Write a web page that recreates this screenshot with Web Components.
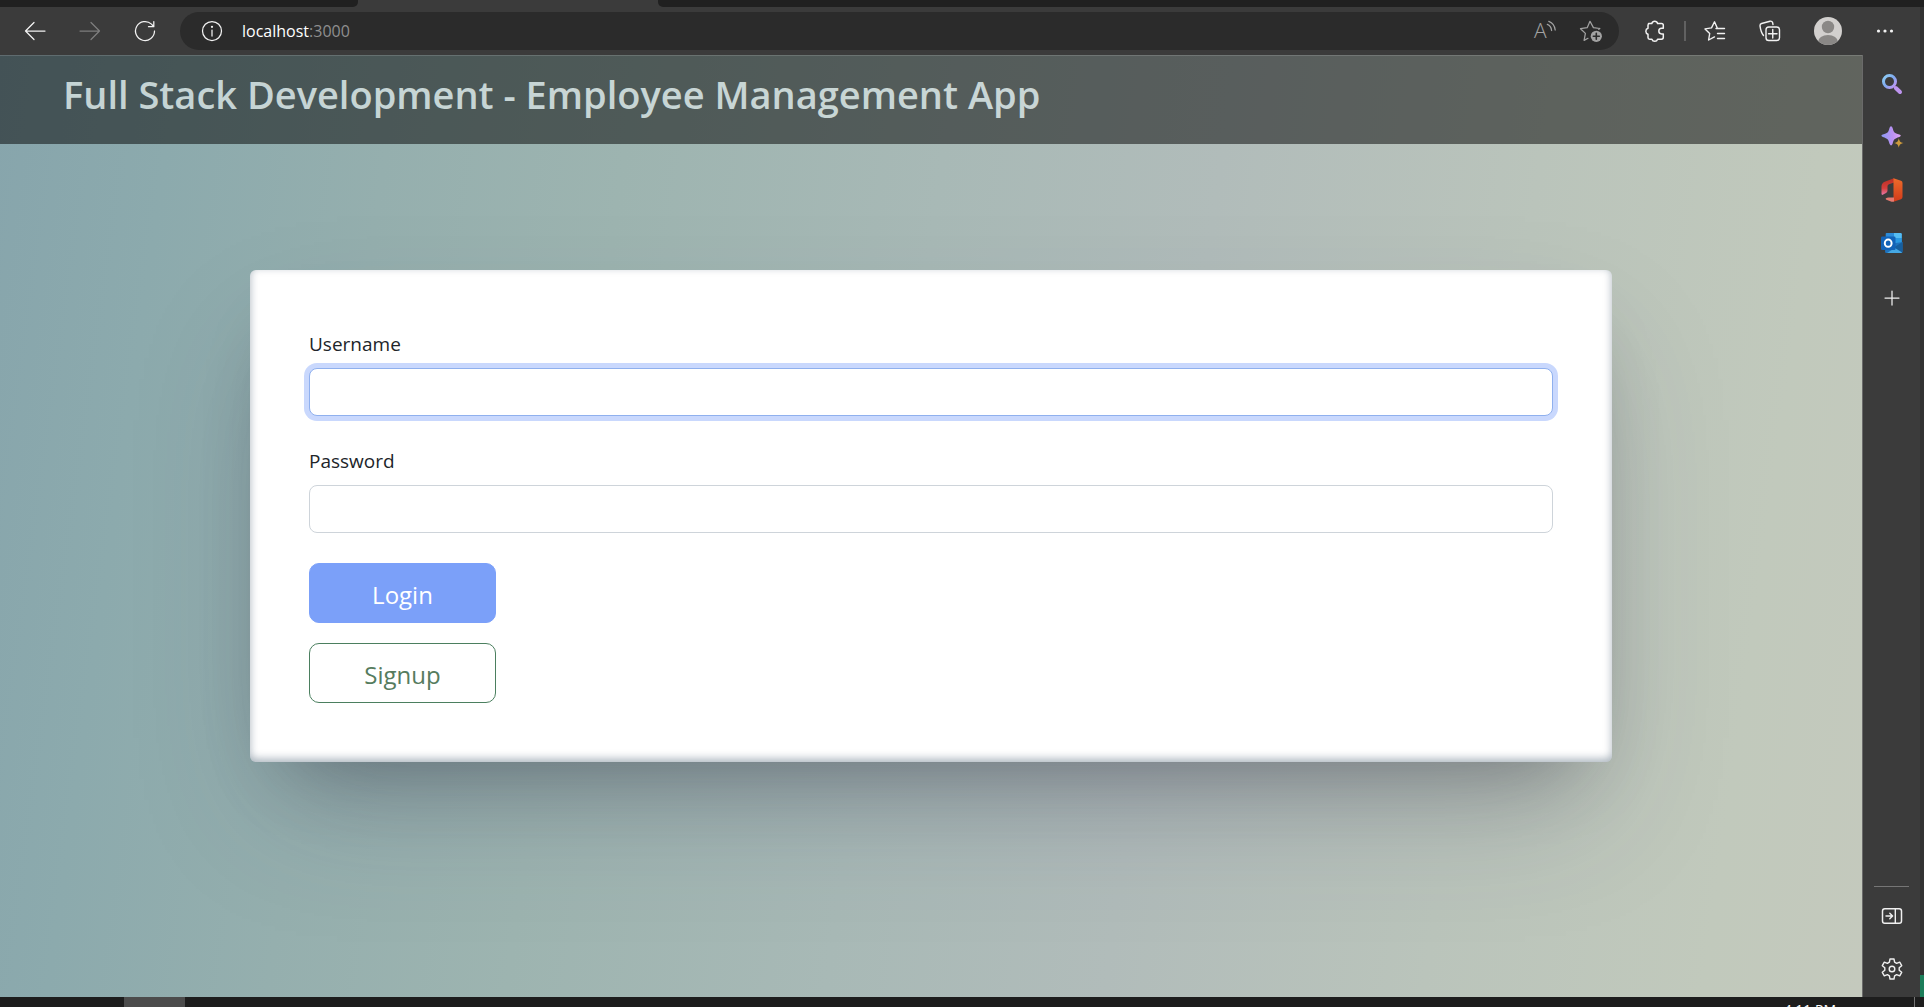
<!DOCTYPE html>
<html lang="en">
<head>
<meta charset="utf-8">
<title>Employee Management App</title>
<style>
  body { margin: 0; font-family: "Open Sans", "Noto Sans", sans-serif; background: #202020; }
</style>
</head>
<body>
<browser-window>
  <browser-toolbar slot="toolbar"></browser-toolbar>
  <app-page>
    <app-header>Full Stack Development - Employee Management App</app-header>
    <login-card></login-card>
  </app-page>
  <side-bar slot="side"></side-bar>
  <task-bar slot="taskbar"></task-bar>
</browser-window>

<script>
const define = (name, html) => {
  const tpl = document.createElement('template');
  tpl.innerHTML = html;
  customElements.define(name, class extends HTMLElement {
    constructor() {
      super();
      this.attachShadow({ mode: 'open' }).append(tpl.content.cloneNode(true));
    }
  });
};

const base = `
  * { box-sizing: border-box; }
  button { display: grid; place-items: center; padding: 0; border: 0; background: none; color: inherit; font: inherit; }
  svg { display: block; width: 24px; height: 24px; fill: none; stroke: currentColor; stroke-width: 1.25; stroke-linecap: round; stroke-linejoin: round; overflow: visible; }
`;

define('browser-window', `
  <style>
    :host { display: flex; flex-direction: column; height: 100vh; overflow: hidden; background: #202020; }
    .tabs { display: flex; flex: none; height: 7px; background: #3b3b3b; }
    .tabs i { background: #202020; }
    .before { width: 358px; border-radius: 0 0 5px 0; }
    .active { width: 300px; }
    .tabs i.active { background: #3b3b3b; }
    .after { flex: 1; border-radius: 0 0 0 5px; }
    .main { display: flex; flex: 1; min-height: 0; }
    .view { display: flex; flex: 1; }
    .edge { display: flex; flex-direction: column; justify-content: flex-end; width: 4px; background: #323232; }
    .edge i { height: 22px; background: #1c7e5a; }
    .left { display: flex; flex-direction: column; flex: 1; }
    .rest { display: flex; flex: 1; min-height: 0; }
  </style>
  <div class="tabs"><i class="before"></i><i class="active"></i><i class="after"></i></div>
  <div class="main">
    <div class="left">
      <slot name="toolbar"></slot>
      <div class="rest"><div class="view"><slot></slot></div><slot name="side"></slot></div>
    </div>
    <div class="edge"><i></i></div>
  </div>
  <slot name="taskbar"></slot>
`);

define('browser-toolbar', `
  <style>${base}
    :host { display: flex; align-items: center; flex: none; height: 48px; padding: 0 23px; background: #3b3b3b; color: #f2f2f2; }
    .nav { display: flex; gap: 31px; }
    .dim { color: #7d7d7d; }
    .pill { display: flex; align-items: center; flex: 1; height: 38px; margin: 0 24px 0 23px; padding: 0 16px 0 20px; border-radius: 19px; background: #2b2b2b; }
    .url { flex: 1; margin-left: 18px; font-size: 16px; line-height: 24px; color: #fff; }
    .url span { color: #8f8f8f; }
    .actions { display: flex; gap: 21px; color: #a2a2a2; }
    .tools { display: flex; align-items: center; }
    .rule { width: 2px; height: 20px; margin: 0 17px; background: #616161; }
    .tools button + button { margin-left: 31px; }
    .tools .avatar + button { margin-left: 30px; }
    .avatar svg { width: 30px; height: 30px; }
  </style>
  <div class="nav">
    <button aria-label="Back"><svg viewBox="0 0 24 24"><path d="M22 12H2.500M11 3.500 2.500 12l8.500 8.500"/></svg></button>
    <button aria-label="Forward" class="dim"><svg viewBox="0 0 24 24"><path d="M2 12h19.500M13 3.500l8.500 8.500-8.500 8.500"/></svg></button>
    <button aria-label="Refresh"><svg viewBox="0 0 24 24"><path d="M21.500 12A9.500 9.500 0 1 1 18.500 5.100L20.500 7.500M20.800 2.500v5.200h-5.300"/></svg></button>
  </div>
  <div class="pill">
    <button aria-label="Site information"><svg viewBox="0 0 24 24"><circle cx="12" cy="12" r="9.500"/><path d="M12 11v6"/><circle cx="12" cy="7.800" r=".5" fill="currentColor"/></svg></button>
    <div class="url">localhost<span>:3000</span></div>
    <div class="actions">
      <button aria-label="Read aloud"><svg viewBox="0 0 24 24"><text x="0" y="19" font-size="21" font-weight="300" fill="currentColor" stroke="none">A</text><path d="M13.300 5.400c2.600 1 4 3.100 4.300 6.100M14.800 2.300c3.800 1.500 6 4.500 6.400 8.700" /></svg></button>
      <button aria-label="Add to favorites"><svg viewBox="0 0 24 24"><path d="M20.800 9.500 14.400 8.600 11 2.300 8.200 8.700l-6.700 1 4.900 4.700-1.300 7 3.900-2.100M20.800 9.500l-1 .8"/><circle cx="17.300" cy="17.300" r="5.600" fill="currentColor" stroke="none"/><path d="M17.300 14.300v6M14.300 17.300h6" stroke="#2b2b2b" stroke-width="1.600"/></svg></button>
    </div>
  </div>
  <div class="tools">
    <button aria-label="Extensions"><svg viewBox="0 0 24 24"><path d="M5.600 4.500H8.800A3 3 0 0 1 14.600 4.500H18.500Q20.300 4.500 20.300 6.300V9.300H18.600A2.700 2.700 0 0 0 18.600 14.900H20.300V18.300Q20.300 20.200 18.500 20.200H14.600A3 3 0 0 1 8.900 20.200H6.600Q5 20.200 5 18.600V15.200A3.100 3.100 0 0 1 5 9.300V6.200Q5 4.500 6.600 4.500Z" stroke-width="1.500"/></svg></button>
    <div class="rule"></div>
    <button aria-label="Favorites"><svg viewBox="0 0 24 24"><path d="M21.500 9.500h-7L11.500 2.800 8.500 8.900l-6.500 1 4.700 4.600-1.100 6.500 5.900-3.100M14.500 14.500h7M14.500 19.500h7M13 9.500h8.500" stroke-width="1.400"/></svg></button>
    <button aria-label="Collections"><svg viewBox="0 0 24 24"><path d="M5.500 16.500C3 13.500 2.500 10.500 2 6.800Q1.900 5 3.600 4.500L12 2.200Q14 1.900 14.600 3.600L15 5.500" stroke-width="1.400"/><rect x="8" y="8" width="13.500" height="13.500" rx="2.800" stroke-width="1.400"/><path d="M14.750 10.500v8.500M10.500 14.750h8.500" stroke-width="1.400"/></svg></button>
    <button aria-label="Profile" class="avatar"><svg viewBox="0 0 30 30" style="stroke:none"><clipPath id="c"><circle cx="15" cy="15" r="14"/></clipPath><g clip-path="url(#c)"><path d="M0 0h30v30H0z" fill="#d2d0ce"/><circle cx="15" cy="11" r="6.200" fill="#8a8886"/><ellipse cx="15" cy="26" rx="10" ry="7" fill="#8a8886"/></g></svg></button>
    <button aria-label="Settings and more"><svg viewBox="0 0 24 24"><g fill="currentColor" stroke="none"><circle cx="5.500" cy="12" r="1.600"/><circle cx="12" cy="12" r="1.600"/><circle cx="18.500" cy="12" r="1.600"/></g></svg></button>
  </div>
`);

define('side-bar', `
  <style>${base}
    :host { display: flex; flex-direction: column; align-items: center; box-sizing: border-box; width: 58px; padding: 17px 0 16px; border-left: 1px solid #6a6a6a; background: #3b3b3b; color: #f0f0f0; }
    .top, .bottom { display: flex; flex-direction: column; gap: 29px; }
    .top { flex: 1; }
    .bottom { padding-top: 17px; border-top: 1px solid #767676; width: 35px; align-items: center; }
  </style>
  <div class="top">
    <button aria-label="Search"><svg viewBox="0 0 24 24"><defs><linearGradient id="s" x1="0" y1="0" x2="1" y2="1"><stop offset="0" stop-color="#8fd0f5"/><stop offset=".5" stop-color="#7fa8ee"/><stop offset="1" stop-color="#c795f3"/></linearGradient></defs><circle cx="9.500" cy="9.500" r="6" stroke="url(#s)" stroke-width="3"/><path d="m15.800 16 4.200 4" stroke="#bd94ee" stroke-width="4"/></svg></button>
    <button aria-label="Discover"><svg viewBox="0 0 24 24"><defs><linearGradient id="d" x1="0" y1="0" x2="1" y2="0"><stop offset="0" stop-color="#8b9af5"/><stop offset=".6" stop-color="#bd91f2"/><stop offset="1" stop-color="#dfa6f2"/></linearGradient></defs><g stroke="none"><path d="M11 1.200q1.200 0 1.600 1.700c1.200 4.500 1.700 5 6.700 6.500q3 1.200 0 2.500c-5 1.700-5.500 2.200-6.700 6.900q-1.500 3.200-3.100 0c-1.200-4.700-1.700-5.200-6.700-6.900q-2.800-1.300 0-2.500c5-1.500 5.500-2 6.700-6.500q.4-1.700 1.500-1.700z" fill="url(#d)"/><path d="M18.800 13.200c.9 3.500 1.300 4 4.800 4.800-3.500.9-3.900 1.300-4.800 4.800-.9-3.500-1.300-3.900-4.800-4.800 3.500-.8 3.900-1.300 4.800-4.800z" fill="#cc9a3c"/></g></svg></button>
    <button aria-label="Office"><svg viewBox="0 0 24 24"><defs><linearGradient id="o" x1="0" y1="0" x2="0" y2="1"><stop offset="0" stop-color="#b92f24"/><stop offset=".6" stop-color="#d63f3c"/><stop offset="1" stop-color="#e878a8"/></linearGradient><linearGradient id="p" x1="0" y1="0" x2="0" y2="1"><stop offset="0" stop-color="#ed6c2b"/><stop offset="1" stop-color="#d33a1a"/></linearGradient></defs><g stroke="none"><path d="m14 .3-9.300 3.500Q1.500 5.200 1.500 8.500v7q0 2 1.700 1.100l2.800-1.500q1.500-.8 1.500-2.600V8.300q0-1.500 1.500-2L14 4.500z" fill="url(#o)"/><path d="m13.500.3 7.500 2.500q1.500.6 1.500 2.200v14q0 1.600-1.500 2.200l-7.500 2.500z" fill="url(#p)"/><path d="M14 19.500H8.500q-1.400 0-2.500.8-1 .8.400 1.500l5.200 1.900q1.300.3 2.400-.2z" fill="#e67a70"/></g></svg></button>
    <button aria-label="Outlook"><svg viewBox="0 0 24 24"><g stroke="none"><path d="M6.500 2h14q1.200 0 1.200 1.200V12h-16V3Q5.700 2 6.500 2z" fill="#2c8bd8"/><path d="M14 2h6.500q1.200 0 1.200 1.200V7H14z" fill="#55bdf2"/><path d="M14 7h7.700v5H14z" fill="#2a99e2"/><path d="M6 12h10l6.500-1v9.500q0 1.500-1.500 1.500H6.500Q5 22 5 20.500z" fill="#1e72bd"/><path d="m13 17 9.500-6v9.500q0 .8-.4 1.100z" fill="#165f9f"/><path d="m7 22 8-5 7.100 4.600q-.4.400-1.100.4z" fill="#45a8e4"/><rect x="1" y="5.500" width="14.500" height="13.500" rx="1.300" fill="#1263b8"/></g><ellipse cx="8.200" cy="12.200" rx="3.400" ry="3.600" stroke="#fff" stroke-width="2"/></svg></button>
    <button aria-label="Customize"><svg viewBox="0 0 24 24"><path d="M12 7v14M5 14h14"/></svg></button>
  </div>
  <div class="bottom">
    <button aria-label="Hide sidebar"><svg viewBox="0 0 24 24"><rect x="2.500" y="4.800" width="19" height="14.500" rx="2.300" stroke-width="1.500"/><path d="M15.300 5v14M6 12h6.500M9.800 9.200l2.800 2.800-2.800 2.800" stroke-width="1.400"/></svg></button>
    <button aria-label="Settings"><svg viewBox="0 0 24 24"><path d="M10 2h4l.6 3.200 2 1.200 3.100-1.200 2 3.500-2.500 2.100v2.400l2.500 2.100-2 3.500-3.100-1.200-2 1.200L14 22h-4l-.6-3.200-2-1.200-3.100 1.200-2-3.500 2.500-2.100v-2.400L2.300 8.700l2-3.500 3.100 1.200 2-1.200z" stroke-width="1.400"/><circle cx="12" cy="12" r="2.800" stroke-width="1.400"/></svg></button>
  </div>
`);

define('task-bar', `
  <style>
    :host { display: flex; flex: none; justify-content: space-between; height: 10px; overflow: hidden; background: #1d1d1d; color: #fff; }
    .app { width: 61px; margin-left: 124px; background: #4c4c4c; }
    .tray { display: flex; align-items: flex-start; }
    time { margin: 3px 78px 0 0; font-size: 14px; line-height: 20px; }
    .peek { width: 1px; height: 10px; margin-right: 9px; background: #757575; }
  </style>
  <div class="app"></div>
  <div class="tray"><time>4:11 PM</time><div class="peek"></div></div>
`);

define('app-page', `
  <style>
    :host { display: block; flex: 1; min-width: 0; overflow: hidden;
      background: linear-gradient(98deg, #87a5ac 0%, #8caaad 9%, #95afae 20%, #9db4b0 32%, #a8b9b6 48%, #b1bcba 62%, #bac4bb 78%, #c1c9bc 92%, #c4c9bd 100%); }
  </style>
  <slot></slot>
`);

define('app-header', `
  <style>
    :host { display: block; height: 89px; border-top: 1px solid rgba(255,255,255,.15); padding: 8px 63px 0; box-sizing: border-box; background: rgba(0,0,0,.5); color: rgba(240,255,255,.75); }
    h1 { margin: 0; font-size: 38px; font-weight: 600; line-height: 60px; white-space: nowrap; }
  </style>
  <h1><slot></slot></h1>
`);

define('login-card', `
  <style>${base}
    :host { display: block; margin: 126px 250px 0; padding: 59px; border-radius: 6px; background: #fff; color: #212529; box-sizing: border-box;
      box-shadow: rgba(50,50,93,.25) 0 63px 125px -25px, rgba(0,0,0,.3) 0 38px 75px -38px, inset rgba(10,37,64,.35) 0 -3px 8px 0; }
    form { display: flex; flex-direction: column; gap: 30px; }
    .field { display: flex; flex-direction: column; gap: 9px; }
    label { font-size: 19px; line-height: 30px; }
    input { width: 100%; height: 48px; padding: 8px 15px; border: 1px solid #ced4da; border-radius: 8px; background: #fff; font: inherit; font-size: 19px; outline: 0; }
    input.current { border-color: #8fb0ee; box-shadow: 0 0 0 5px #c9d8fd; }
    .buttons { display: flex; flex-direction: column; gap: 20px; }
    .buttons button { width: 187px; height: 60px; padding-top: 3px; border: 1px solid #7ba0f9; border-radius: 10px; background: #7ba0f9; color: #fff; font-size: 24px; line-height: 36px; }
    .buttons .outline { border-color: #4b7f5f; background: #fff; color: #567c5e; }
  </style>
  <form>
    <div class="field"><label for="u">Username</label><input id="u" type="text" class="current"></div>
    <div class="field"><label for="p">Password</label><input id="p" type="password"></div>
    <div class="buttons"><button type="button">Login</button><button type="button" class="outline">Signup</button></div>
  </form>
`);
</script>
</body>
</html>
